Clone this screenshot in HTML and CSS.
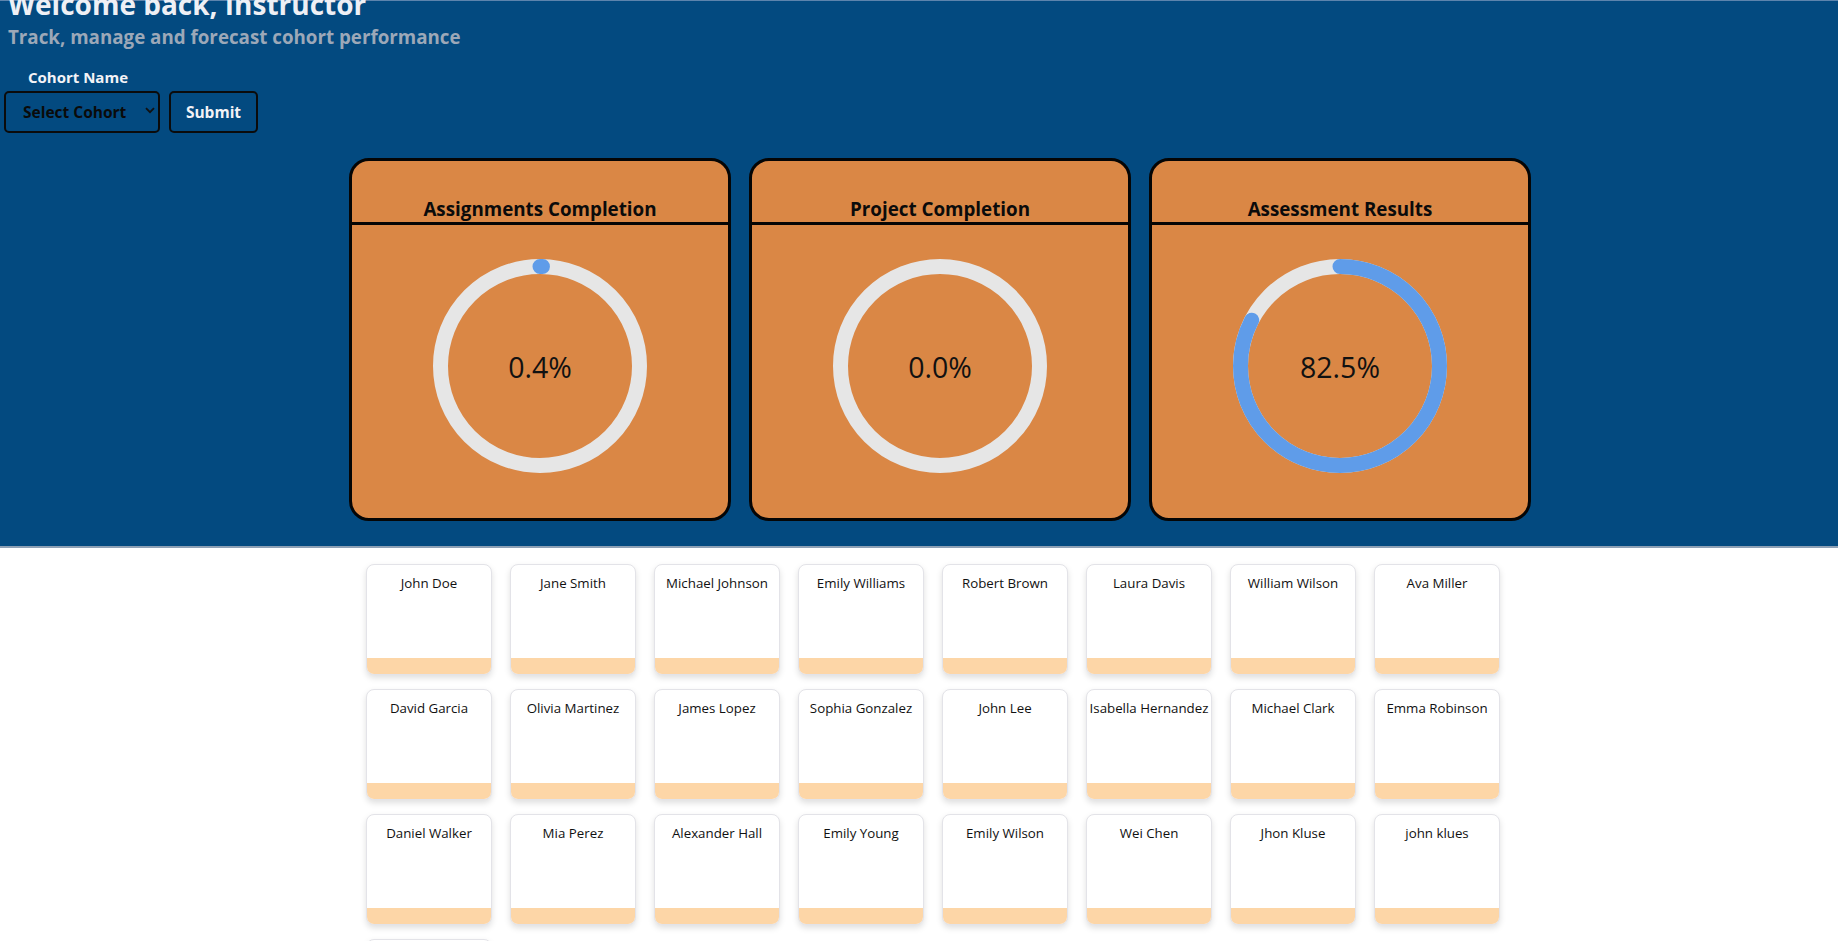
FILE: index.html
```html
<!DOCTYPE html>
<html lang="en">
<head>
<meta charset="utf-8">
<title>Instructor Dashboard</title>
<link rel="stylesheet" href="styles.css">
</head>
<body>
<header class="hero">
  <h1 class="hero-title">Welcome back, Instructor</h1>
  <p class="hero-sub">Track, manage and forecast cohort performance</p>
  <form class="cohort-form">
    <div class="field">
      <label class="field-label" for="cohort">Cohort Name</label>
      <div class="select-wrap">
        <select id="cohort" class="cohort-select">
          <option>Select Cohort</option>
        </select>
        <svg class="chev" width="10" height="7" viewBox="0 0 10 7"><path d="M1 1.2 L5 5.2 L9 1.2" fill="none" stroke="#111" stroke-width="1.8"/></svg>
      </div>
    </div>
    <button type="button" class="submit-btn">Submit</button>
  </form>
  <section class="metrics">
    <div class="metric-card">
      <div class="metric-head"><h3>Assignments Completion</h3></div>
      <div class="metric-body">
        <div class="ring">
          <svg width="214" height="214" viewBox="0 0 214 214">
            <circle cx="107" cy="107" r="99.5" class="track"/>
            <circle cx="107" cy="107" r="99.5" class="bar" stroke-dasharray="2.5 625.17" transform="rotate(-90 107 107)"/>
          </svg>
          <span class="ring-text">0.4%</span>
        </div>
      </div>
    </div>
    <div class="metric-card">
      <div class="metric-head"><h3>Project Completion</h3></div>
      <div class="metric-body">
        <div class="ring">
          <svg width="214" height="214" viewBox="0 0 214 214">
            <circle cx="107" cy="107" r="99.5" class="track"/>
          </svg>
          <span class="ring-text">0.0%</span>
        </div>
      </div>
    </div>
    <div class="metric-card">
      <div class="metric-head"><h3>Assessment Results</h3></div>
      <div class="metric-body">
        <div class="ring">
          <svg width="214" height="214" viewBox="0 0 214 214">
            <circle cx="107" cy="107" r="99.5" class="track"/>
            <circle cx="107" cy="107" r="99.5" class="bar" stroke-dasharray="515.77 625.17" transform="rotate(-90 107 107)"/>
          </svg>
          <span class="ring-text">82.5%</span>
        </div>
      </div>
    </div>
  </section>
</header>
<main class="students">
  <div class="student"><span class="student-name">John Doe</span><div class="student-bar"></div></div>
  <div class="student"><span class="student-name">Jane Smith</span><div class="student-bar"></div></div>
  <div class="student"><span class="student-name">Michael Johnson</span><div class="student-bar"></div></div>
  <div class="student"><span class="student-name">Emily Williams</span><div class="student-bar"></div></div>
  <div class="student"><span class="student-name">Robert Brown</span><div class="student-bar"></div></div>
  <div class="student"><span class="student-name">Laura Davis</span><div class="student-bar"></div></div>
  <div class="student"><span class="student-name">William Wilson</span><div class="student-bar"></div></div>
  <div class="student"><span class="student-name">Ava Miller</span><div class="student-bar"></div></div>
  <div class="student"><span class="student-name">David Garcia</span><div class="student-bar"></div></div>
  <div class="student"><span class="student-name">Olivia Martinez</span><div class="student-bar"></div></div>
  <div class="student"><span class="student-name">James Lopez</span><div class="student-bar"></div></div>
  <div class="student"><span class="student-name">Sophia Gonzalez</span><div class="student-bar"></div></div>
  <div class="student"><span class="student-name">John Lee</span><div class="student-bar"></div></div>
  <div class="student"><span class="student-name">Isabella Hernandez</span><div class="student-bar"></div></div>
  <div class="student"><span class="student-name">Michael Clark</span><div class="student-bar"></div></div>
  <div class="student"><span class="student-name">Emma Robinson</span><div class="student-bar"></div></div>
  <div class="student"><span class="student-name">Daniel Walker</span><div class="student-bar"></div></div>
  <div class="student"><span class="student-name">Mia Perez</span><div class="student-bar"></div></div>
  <div class="student"><span class="student-name">Alexander Hall</span><div class="student-bar"></div></div>
  <div class="student"><span class="student-name">Emily Young</span><div class="student-bar"></div></div>
  <div class="student"><span class="student-name">Emily Wilson</span><div class="student-bar"></div></div>
  <div class="student"><span class="student-name">Wei Chen</span><div class="student-bar"></div></div>
  <div class="student"><span class="student-name">Jhon Kluse</span><div class="student-bar"></div></div>
  <div class="student"><span class="student-name">john klues</span><div class="student-bar"></div></div>
  <div class="student"><span class="student-name">Sarah Allen</span><div class="student-bar"></div></div>
</main>
</body>
</html>
```
FILE: styles.css
```css
html {
  overflow: hidden;
}
body {
  margin: 0;
  font-family: "Open Sans", "Noto Sans", sans-serif;
  background: #ffffff;
  color: #111;
}
.hero {
  background: #034a80;
  border-top: 1px solid #5d84ad;
  border-bottom: 2px solid #8da0b5;
  padding: 0 0 25px 0;
}
.hero-title {
  margin: -12px 0 0 8px;
  font-size: 28px;
  line-height: 30px;
  font-weight: 700;
  color: #eef0f5;
}
.hero-sub {
  margin: 6px 0 0 8px;
  font-size: 18.75px;
  line-height: 24px;
  font-weight: 700;
  color: #9ca8b8;
}
.cohort-form {
  display: flex;
  align-items: flex-end;
  gap: 9px;
  margin: 18px 0 0 4px;
}
.field {
  display: flex;
  flex-direction: column;
  align-items: center;
  width: 156px;
}
.field-label {
  font-size: 15px;
  font-weight: 700;
  color: #f3f3f7;
  line-height: 20px;
  margin: 0 8px 4px 0;
}
.select-wrap {
  display: grid;
  width: 156px;
}
.cohort-select {
  grid-area: 1 / 1;
  appearance: none;
  -webkit-appearance: none;
  width: 156px;
  height: 42px;
  box-sizing: border-box;
  background: #034a80;
  border: 2px solid #0b0b0b;
  border-radius: 5px;
  font-family: inherit;
  font-size: 15.5px;
  font-weight: 700;
  color: #0a0a0a;
  padding: 0 0 0 17px;
}
.chev {
  grid-area: 1 / 1;
  justify-self: end;
  align-self: center;
  margin-right: 5px;
  margin-top: -3px;
  pointer-events: none;
}
.submit-btn {
  width: 89px;
  height: 42px;
  box-sizing: border-box;
  background: #034a80;
  border: 2px solid #0b0b0b;
  border-radius: 5px;
  font-family: inherit;
  font-size: 15.5px;
  font-weight: 700;
  color: #f2f2f6;
  padding: 0;
}
.metrics {
  display: flex;
  justify-content: center;
  gap: 18px;
  padding-left: 42px;
  margin-top: 25px;
}
.metric-card {
  width: 382px;
  height: 363px;
  box-sizing: border-box;
  background: #da8745;
  border: 3px solid #050505;
  border-radius: 20px;
  display: flex;
  flex-direction: column;
}
.metric-head {
  height: 61px;
  border-bottom: 3px solid #050505;
  display: flex;
  align-items: flex-end;
  justify-content: center;
}
.metric-head h3 {
  margin: 0 0 1px 0;
  font-size: 18.8px;
  line-height: 23px;
  font-weight: 700;
  color: #0b0b0b;
}
.metric-body {
  display: flex;
  justify-content: center;
  padding-top: 34px;
}
.ring {
  display: grid;
  width: 214px;
  height: 214px;
}
.ring svg,
.ring-text {
  grid-area: 1 / 1;
}
.ring-text {
  align-self: center;
  justify-self: center;
  font-size: 28.5px;
  color: #111;
  margin-top: 2px;
}
.track {
  fill: none;
  stroke: #e6e6e6;
  stroke-width: 15;
}
.bar {
  fill: none;
  stroke: #5f9ce9;
  stroke-width: 15;
  stroke-linecap: round;
}
.students {
  display: grid;
  grid-template-columns: repeat(8, 126px);
  justify-content: center;
  column-gap: 18px;
  row-gap: 14px;
  padding: 16px 0 20px 28px;
}
.student {
  height: 111px;
  box-sizing: border-box;
  background: #fff;
  border: 1px solid #e3e3e8;
  border-radius: 8px;
  box-shadow: 0 3px 6px rgba(0, 0, 0, 0.13);
  overflow: hidden;
  display: flex;
  flex-direction: column;
  align-items: center;
}
.student-name {
  font-size: 13.3px;
  line-height: 18px;
  margin-top: 9px;
  color: #111;
  white-space: nowrap;
}
.student-bar {
  margin-top: auto;
  align-self: stretch;
  height: 16px;
  background: #fdd6a7;
}
```
